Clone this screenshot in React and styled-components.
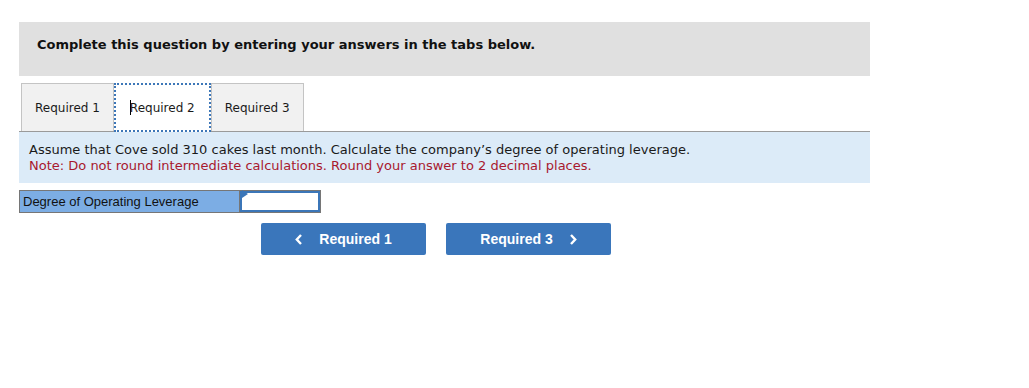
import styled, { createGlobalStyle } from "styled-components";

const GlobalStyle = createGlobalStyle`
  body {
    margin: 0;
    background: #fff;
    font-family: "DejaVu Sans", Verdana, sans-serif;
    color: #111;
  }
`;

const Page = styled.div`
  width: 851px;
  padding: 22px 0 0 19px;
`;

const Instructions = styled.div`
  background: #e0e0e0;
  padding: 15px 18px 23px;
  font-size: 13px;
  line-height: 16px;
  font-weight: bold;
  color: #111;
`;

const TabBar = styled.div`
  display: flex;
  margin-top: 7px;
  padding-left: 2px;
  border-bottom: 1px solid #9a9a9a;
`;

const Tab = styled.div`
  position: relative;
  display: flex;
  align-items: center;
  height: ${(p) => (p.$active ? "49px" : "47px")};
  margin-bottom: ${(p) => (p.$active ? "-1px" : "0")};
  padding: 0 ${(p) => (p.$active ? "16px" : "13px")};
  background: ${(p) => (p.$active ? "#fff" : "#f1f1f1")};
  border: ${(p) => (p.$active ? "none" : "1px solid #c4c4c4")};
  border-bottom: none;
  outline: ${(p) => (p.$active ? "2px dotted #3d77b8" : "none")};
  outline-offset: -2px;
  font-size: 12px;
  color: #1a1a1a;
  z-index: ${(p) => (p.$active ? 1 : 0)};
`;

const Caret = styled.span`
  display: inline-block;
  width: 1px;
  height: 15px;
  background: #000;
  margin-right: -1px;
`;

const Prompt = styled.div`
  background: #dcebf8;
  padding: 10px 10px 9px;
  font-size: 13px;
  line-height: 16px;
  color: #1a1a1a;
`;

const Note = styled.div`
  color: #a8192e;
`;

const AnswerRow = styled.div`
  display: flex;
  width: 300px;
  height: 21px;
  margin-top: 7px;
  border: 1px solid #767676;
  font-family: "Liberation Sans", Arial, sans-serif;
  font-size: 13px;
`;

const Label = styled.div`
  width: 216px;
  padding-left: 3px;
  display: flex;
  align-items: center;
  background: #7cade4;
  border-right: 1px solid #767676;
  color: #111;
`;

const InputCell = styled.div`
  position: relative;
  flex: 1;
  background: #fff;
  border: 2px solid #3b76b8;
`;

const Flag = styled.span`
  position: absolute;
  left: 0;
  top: 0;
  width: 0;
  height: 0;
  border-top: 4px solid transparent;
  border-bottom: 4px solid transparent;
  border-left: 6px solid #3b76b8;
  transform: translateY(-3px);
`;

const NavRow = styled.div`
  display: flex;
  gap: 20px;
  margin-top: 10px;
  padding-left: 242px;
`;

const NavButton = styled.button`
  display: flex;
  align-items: center;
  justify-content: center;
  gap: 16px;
  width: 165px;
  height: 32px;
  border: none;
  border-radius: 2px;
  background: #3a76bb;
  color: #fff;
  font-family: "Liberation Sans", Arial, sans-serif;
  font-weight: bold;
  font-size: 14px;
  padding: 0;
`;

const Chevron = ({ dir }) => (
  <svg width="8" height="11" viewBox="0 0 8 11">
    <polyline
      points={dir === "left" ? "6,1 1.8,5.5 6,10" : "2,1 6.2,5.5 2,10"}
      fill="none"
      stroke="#fff"
      strokeWidth="2.4"
    />
  </svg>
);

export default function App() {
  return (
    <>
      <GlobalStyle />
      <Page>
        <Instructions>
          Complete this question by entering your answers in the tabs below.
        </Instructions>
        <TabBar>
          <Tab>Required 1</Tab>
          <Tab $active>
            <Caret />
            Required 2
          </Tab>
          <Tab>Required 3</Tab>
        </TabBar>
        <Prompt>
          <div>
            Assume that Cove sold 310 cakes last month. Calculate the company’s
            degree of operating leverage.
          </div>
          <Note>
            Note: Do not round intermediate calculations. Round your answer to 2
            decimal places.
          </Note>
        </Prompt>
        <AnswerRow>
          <Label>Degree of Operating Leverage</Label>
          <InputCell>
            <Flag />
          </InputCell>
        </AnswerRow>
        <NavRow>
          <NavButton>
            <Chevron dir="left" />
            Required 1
          </NavButton>
          <NavButton>
            Required 3
            <Chevron dir="right" />
          </NavButton>
        </NavRow>
      </Page>
    </>
  );
}
